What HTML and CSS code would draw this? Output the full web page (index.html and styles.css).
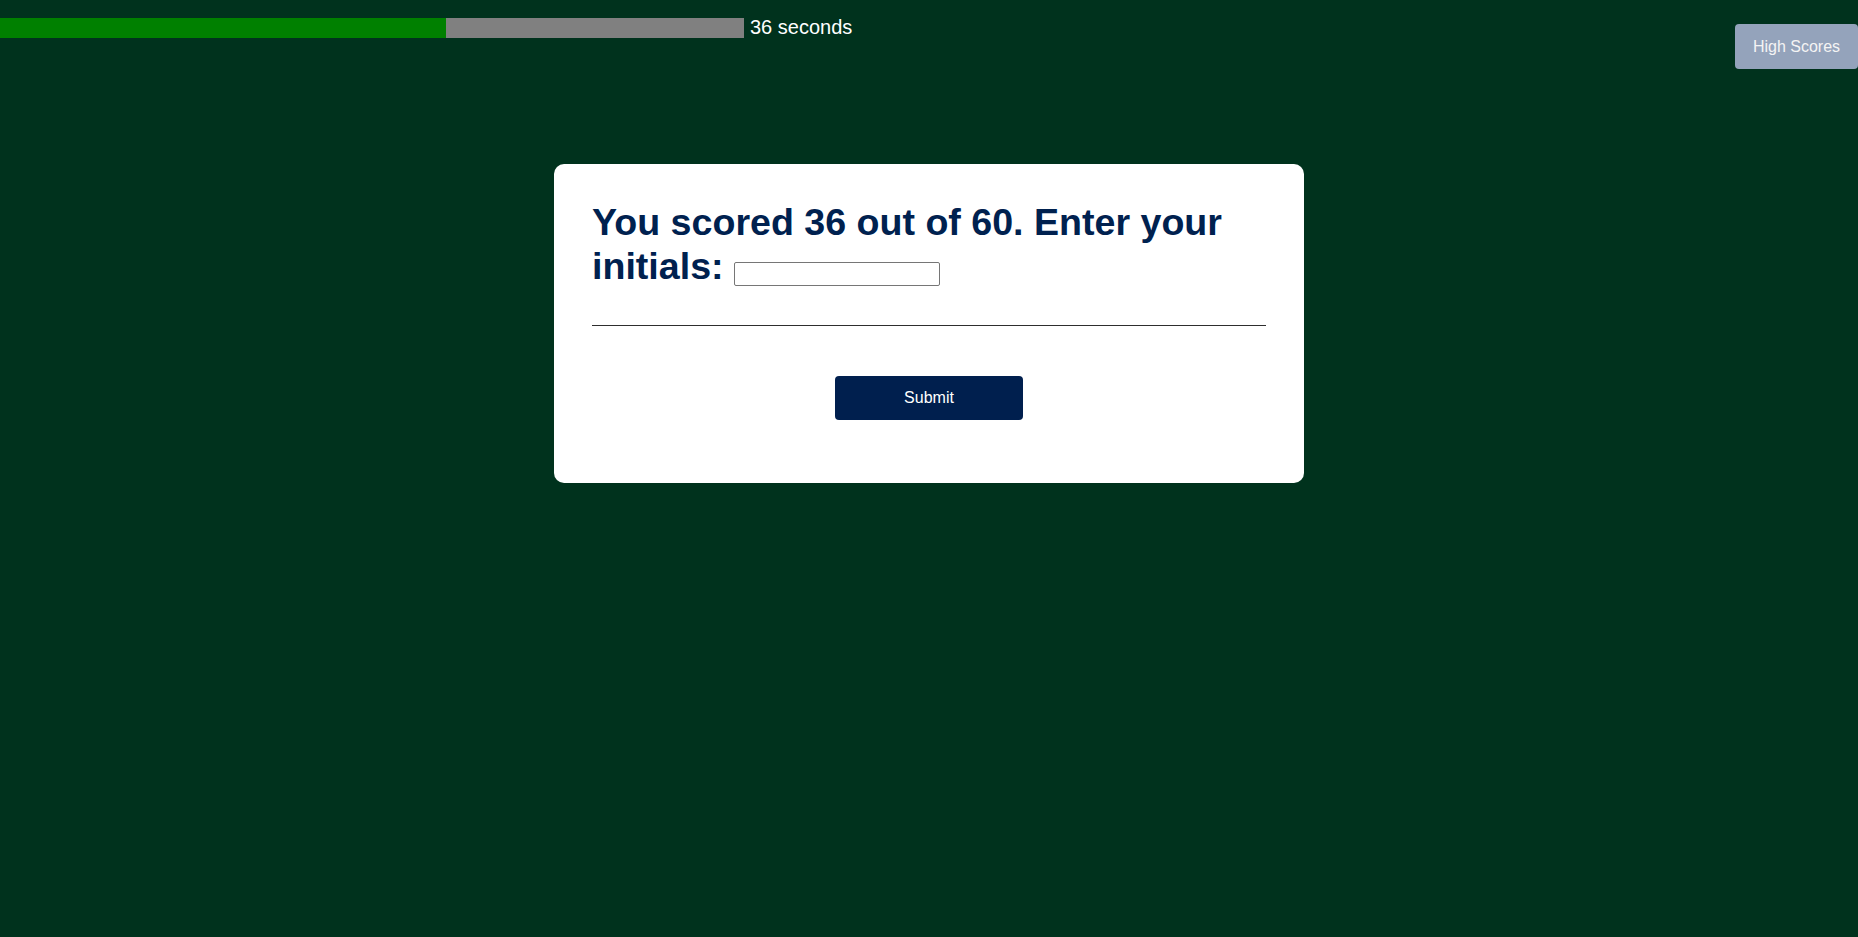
FILE: index.html
```html
<!DOCTYPE html>
<html lang="en">
<head>
<meta charset="utf-8">
<title>Quiz</title>
<link rel="stylesheet" href="styles.css">
</head>
<body>
<header class="timer-row">
  <div class="timer-bar"><div class="timer-fill" style="width: 60%"></div></div>
  <span class="timer-text">36 seconds</span>
</header>
<button class="high-scores" type="button">High Scores</button>
<main class="card">
  <h1 class="score-title">You scored 36 out of 60. Enter your initials: <input class="initials" type="text"></h1>
  <hr class="divider">
  <div class="actions">
    <button class="submit" type="button">Submit</button>
  </div>
</main>
</body>
</html>
```
FILE: styles.css
```css
html, body {
  margin: 0;
  padding: 0;
}
body {
  background: #00321d;
  font-family: "Liberation Sans", Arial, sans-serif;
  min-height: 937px;
}
.timer-row {
  display: flex;
  align-items: center;
  padding-top: 18px;
  height: 20px;
}
.timer-bar {
  width: 744px;
  height: 20px;
  background: #808080;
  display: flex;
}
.timer-fill {
  height: 100%;
  background: #008000;
}
.timer-text {
  margin-left: 6px;
  margin-top: -2px;
  color: #ffffff;
  font-size: 20px;
  line-height: 23px;
}
.high-scores {
  position: absolute;
  top: 24px;
  right: 0;
  width: 123px;
  height: 45px;
  padding: 1px 0 0;
  border: 0;
  border-radius: 4px;
  background: #94a3bb;
  color: #f4f4f4;
  font-family: "Liberation Sans", Arial, sans-serif;
  font-size: 16px;
}
.card {
  box-sizing: border-box;
  width: 750px;
  margin: 126px auto 0;
  padding: 36px 38px 63px;
  background: #ffffff;
  border-radius: 10px;
}
.score-title {
  margin: 0;
  color: #00214f;
  font-size: 37.6px;
  line-height: 44px;
  font-weight: bold;
}
.initials {
  box-sizing: border-box;
  width: 206px;
  height: 24px;
  padding: 1px 2px;
  border: 1px solid #767676;
  border-radius: 2px;
  font-family: "Liberation Sans", Arial, sans-serif;
  font-size: 16px;
  vertical-align: baseline;
  background: #fff;
}
.divider {
  margin: 37px 0 0;
  border: 0;
  border-top: 1px solid #2e2e2e;
  height: 0;
}
.actions {
  display: flex;
  justify-content: center;
  margin-top: 50px;
}
.submit {
  width: 187.5px;
  height: 44px;
  border: 0;
  border-radius: 4px;
  background: #001f4e;
  color: #ffffff;
  font-family: "Liberation Sans", Arial, sans-serif;
  font-size: 16px;
}
```
